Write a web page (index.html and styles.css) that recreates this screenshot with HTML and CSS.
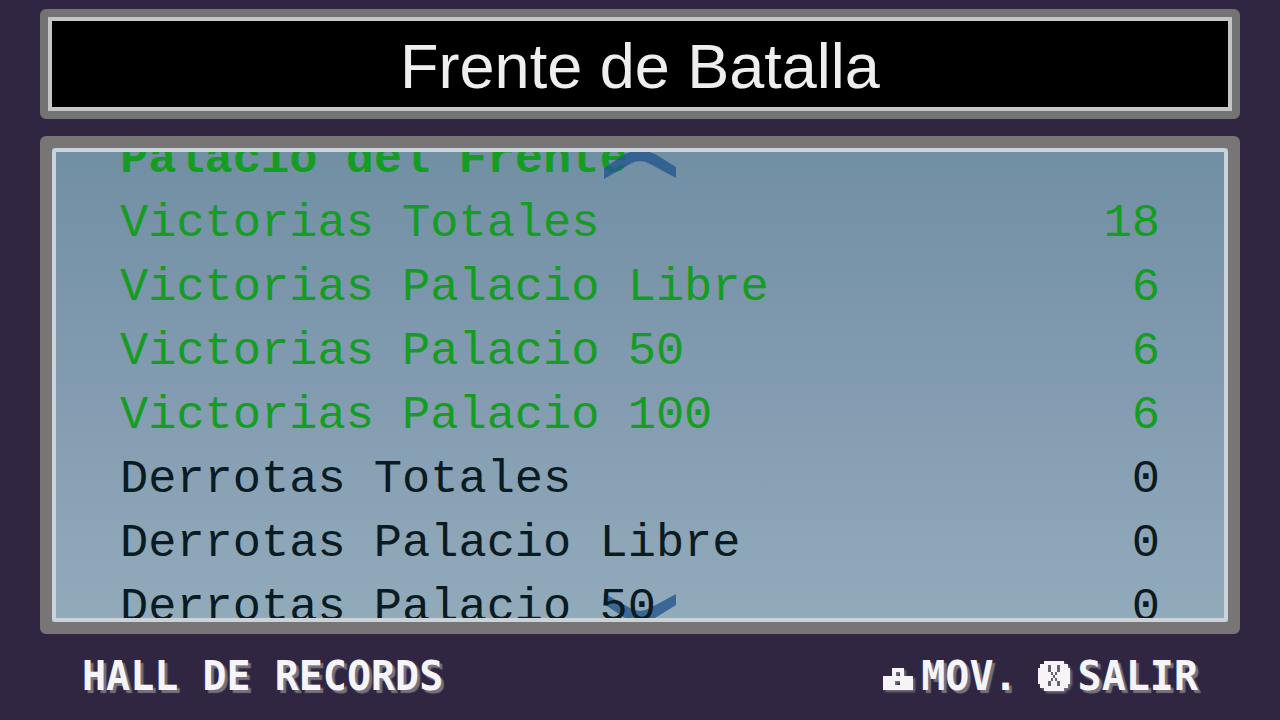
FILE: index.html
```html
<!DOCTYPE html>
<html lang="es">
  <head>
    <meta charset="UTF-8" />
    <meta name="viewport" content="width=device-width, initial-scale=1.0" />
    <title>Frente de Batalla</title>
    <link rel="stylesheet" href="styles.css">
  </head>

  <body>
    <header class="title-box">
      <h1 class="title">Frente de Batalla</h1>
    </header>

    <main class="panel">
      <button class="arrow arrow-up" aria-label="Subir">
        <svg width="74" height="28" viewBox="0 0 74 28">
          <path d="M1 17 L22 3 Q37 -4 52 3 L73 16 V27 L47 13 Q37 7 27 13 L1 28 Z" />
        </svg>
      </button>

      <table class="records">
        <tr class="win heading"><th colspan="2">Palacio del Frente</th></tr>
        <tr class="win"><th>Victorias Totales</th><td>18</td></tr>
        <tr class="win"><th>Victorias Palacio Libre</th><td>6</td></tr>
        <tr class="win"><th>Victorias Palacio 50</th><td>6</td></tr>
        <tr class="win"><th>Victorias Palacio 100</th><td>6</td></tr>
        <tr><th>Derrotas Totales</th><td>0</td></tr>
        <tr><th>Derrotas Palacio Libre</th><td>0</td></tr>
        <tr><th>Derrotas Palacio 50</th><td>0</td></tr>
      </table>

      <button class="arrow arrow-down" aria-label="Bajar">
        <svg width="74" height="28" viewBox="0 0 74 28">
          <path d="M1 0 L27 15 Q37 21 47 15 L73 1 V12 L52 25 Q37 32 22 25 L1 11 Z" />
        </svg>
      </button>
    </main>

    <footer class="footer">
      <span>HALL DE RECORDS</span>
      <div class="keys">
        <button class="key">
          <!-- d-pad -->
          <svg class="icon" width="30" height="30" viewBox="0 0 30 30">
            <path fill-rule="evenodd" d="M9 7h12v8h9v14h-30v-14h9zM13 11v4h4v-4zM12 20v4h5v-4z" />
          </svg>
          MOV.
        </button>
        <button class="key">
          <!-- X button -->
          <svg class="icon" width="32" height="30" viewBox="0 0 32 30">
            <path d="M6 0h20v3h4v4h2v16h-2v4h-4v3h-20v-3h-4v-4h-2v-16h2v-4h4z" />
            <path class="cross" d="M10 4h3v7h-3zM19 4h3v7h-3zM13 11h2v3h-2zM17 11h2v3h-2zM15 14h2v3h-2zM13 17h2v3h-2zM17 17h2v3h-2zM10 20h3v5h-3zM19 20h3v5h-3z" />
          </svg>
          SALIR
        </button>
      </div>
    </footer>
  </body>
</html>
```
FILE: styles.css
```css
* {
  margin: 0;
  padding: 0;
  box-sizing: border-box;
}

body {
  height: 100vh;
  padding: 9px 40px 0;
  display: flex;
  flex-direction: column;
  gap: 17px;
  overflow: hidden;
  background-color: #302642;
}

button {
  border: none;
  background: none;
  color: inherit;
  font: inherit;
  cursor: pointer;
}

.title-box {
  padding: 8px 0 4px;
  border: 8px solid #747374;
  border-radius: 6px;
  background-color: #000;
  box-shadow: inset 0 0 0 4px #c6c5c6;
}

.title {
  font-family: "Liberation Sans", Arial, sans-serif;
  font-size: 63px;
  font-weight: normal;
  line-height: 82px;
  text-align: center;
  color: #eee;
}

/* list of records, scrolled a little */
.panel {
  position: relative;
  flex: 1;
  min-height: 0;
  padding: 0 68px;
  border: 12px solid #777576;
  border-radius: 6px;
  background: linear-gradient(#718fa3, #829bb0 50%, #92abbb);
  overflow: hidden;
}

.panel::after {
  content: "";
  position: absolute;
  inset: 0;
  z-index: 3;
  border: 4px solid #cbd3d8;
  border-radius: 4px;
  pointer-events: none;
}

.records {
  position: relative;
  z-index: 1;
  width: 100%;
  margin-top: -20px;
  border-collapse: collapse;
  font-family: "Liberation Mono", "Courier New", monospace;
  font-size: 47px;
  line-height: 64px;
  color: #0b1b22;
}

.records th {
  font-weight: normal;
  text-align: left;
}

.records td {
  text-align: right;
}

.records .win {
  color: #159c22;
}

.records .heading th {
  font-weight: bold;
}

.arrow {
  position: absolute;
  left: 50%;
  transform: translateX(-50%);
  height: 28px;
}

.arrow svg {
  display: block;
  fill: #24588f;
  opacity: 0.8;
}

.arrow-up {
  top: 3px;
  z-index: 2;
}

.arrow-down {
  bottom: 1px;
}

.footer {
  display: flex;
  justify-content: space-between;
  padding: 0 42px;
  height: 69px;
  font-family: "DejaVu Sans Mono", monospace;
  font-size: 40px;
  font-weight: bold;
  line-height: 50px;
  color: #f6f4f6;
  text-shadow: 3px 3px 1px #77717b;
}

.keys {
  display: flex;
  gap: 20px;
}

.key {
  display: flex;
  align-items: center;
  gap: 8px;
  height: 50px;
  text-shadow: inherit;
}

.icon {
  fill: #f6f4f6;
  filter: drop-shadow(2px 2px 1px #77717b);
}

.icon .cross {
  fill: #676071;
}
```
